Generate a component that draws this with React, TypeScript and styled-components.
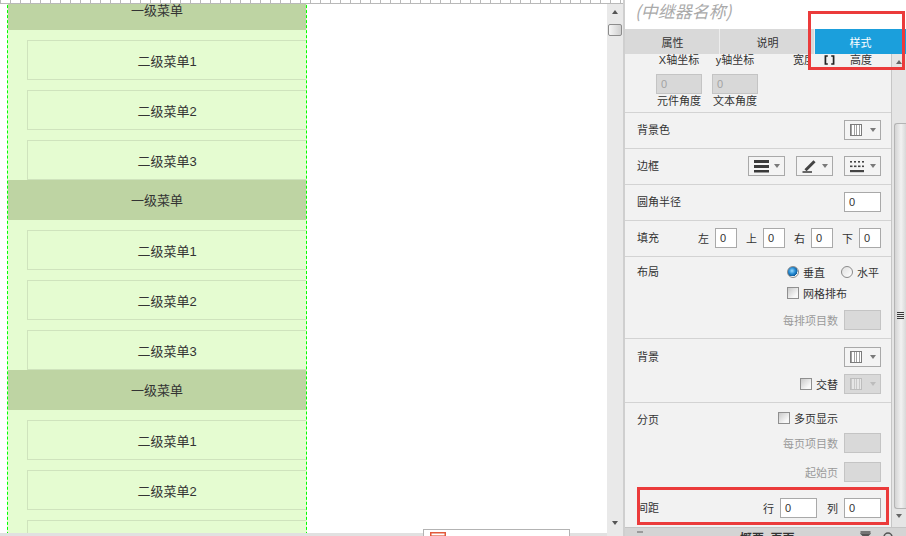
import React from 'react'
import styled, { createGlobalStyle } from 'styled-components'

const GlobalStyle = createGlobalStyle`
  * { box-sizing: border-box; }
  html, body { margin: 0; padding: 0; background: #fff; }
  body {
    font-family: "Liberation Sans", "Noto Sans CJK SC", sans-serif;
    font-size: 11px;
    color: #333;
  }
`

const menuGroups = [
  { title: '一级菜单', items: ['二级菜单1', '二级菜单2', '二级菜单3'] },
  { title: '一级菜单', items: ['二级菜单1', '二级菜单2', '二级菜单3'] },
  { title: '一级菜单', items: ['二级菜单1', '二级菜单2', '二级菜单3'] },
]

const LockIcon = () => (
  <svg width="11" height="10" viewBox="0 0 11 10">
    <path d="M3.8 1H1.4V9H3.8M7.2 1H9.6V9H7.2" fill="none" stroke="#222" strokeWidth="1.7" />
  </svg>
)

const WeightIcon = () => (
  <svg width="15" height="14" viewBox="0 0 15 14">
    <g fill="#3a3a3a">
      <rect x="0" y="1" width="15" height="3" />
      <rect x="0" y="6" width="15" height="3" />
      <rect x="0" y="11" width="15" height="2.5" />
    </g>
  </svg>
)

const PenIcon = () => (
  <svg width="16" height="14" viewBox="0 0 16 14">
    <path d="M0.5 13H10" stroke="#444" strokeWidth="1.6" />
    <path d="M3.5 11.2L12.5 2.2" stroke="#444" strokeWidth="3" />
  </svg>
)

const DashIcon = () => (
  <svg width="14" height="13" viewBox="0 0 14 13">
    <g fill="#444">
      <rect x="0" y="1" width="2" height="1.6" />
      <rect x="4" y="1" width="2" height="1.6" />
      <rect x="8" y="1" width="2" height="1.6" />
      <rect x="12" y="1" width="2" height="1.6" />
      <rect x="0" y="5.5" width="2.5" height="1.6" />
      <rect x="4" y="5.5" width="2.5" height="1.6" />
      <rect x="8" y="5.5" width="2.5" height="1.6" />
      <rect x="12" y="5.5" width="2" height="1.6" />
      <rect x="0" y="10" width="14" height="2.2" />
    </g>
  </svg>
)

const FunnelIcon = () => (
  <svg width="11" height="9" viewBox="0 0 11 9">
    <path d="M0.5 1H10.5M1.5 3L5.5 7L9.5 3Z" fill="#555" stroke="#555" strokeWidth="1.4" />
  </svg>
)

const SearchIcon = () => (
  <svg width="11" height="9" viewBox="0 0 11 9">
    <circle cx="5" cy="6" r="4" fill="none" stroke="#555" strokeWidth="1.5" />
  </svg>
)

const TableIcon = () => (
  <svg width="16" height="10" viewBox="0 0 16 10">
    <rect x="0.75" y="1.75" width="14.5" height="10" fill="#fff" stroke="#e25b3c" strokeWidth="1.5" />
    <path d="M1 5H15" stroke="#e25b3c" strokeWidth="1.2" />
  </svg>
)

const App = () => (
  <>
    <GlobalStyle />
    <Screen>
      <Canvas>
        <Ruler />
        <CanvasMain>
          <StageColumn>
            <Stage>
              <MenuPanel>
                {menuGroups.map((g, gi) => (
                  <React.Fragment key={gi}>
                    <MenuHeader>{g.title}</MenuHeader>
                    {g.items.map(it => (
                      <SubItem key={it}>{it}</SubItem>
                    ))}
                  </React.Fragment>
                ))}
              </MenuPanel>
            </Stage>
            <CanvasFooter />
          </StageColumn>
          <CanvasScroll>
            <ArrowUp />
            <CanvasThumb />
            <ArrowDown />
          </CanvasScroll>
        </CanvasMain>
      </Canvas>

      <Inspector>
        <InspectorTitle>(中继器名称)</InspectorTitle>
        <Tabs>
          <Tab $w={95}>属性</Tab>
          <Tab $w={95}>说明</Tab>
          <Tab $w={91} $active>样式</Tab>
        </Tabs>
        <InspectorBody>
          <Content>
            <GeoSection>
              <GeoRow $h={12}>
                <GeoCell>X轴坐标</GeoCell>
                <GeoCell>y轴坐标</GeoCell>
                <ClipLabel>宽度</ClipLabel>
                <LockBox>
                  <LockIcon />
                </LockBox>
                <HeightLabel>高度</HeightLabel>
              </GeoRow>
              <GeoRow $h={20} $mt={8}>
                <GeoInput>0</GeoInput>
                <GeoInput>0</GeoInput>
              </GeoRow>
              <GeoRow $h={12} $mt={1}>
                <GeoCell>元件角度</GeoCell>
                <GeoCell>文本角度</GeoCell>
              </GeoRow>
            </GeoSection>

            <Section $pt={7} $pb={8}>
              <SectionLabel>背景色</SectionLabel>
              <Controls>
                <DropButton>
                  <Swatch />
                  <Caret />
                </DropButton>
              </Controls>
            </Section>

            <Section $pt={7} $pb={8}>
              <SectionLabel>边框</SectionLabel>
              <Controls>
                <ControlRow $gap={11}>
                  <DropButton>
                    <WeightIcon />
                    <Caret />
                  </DropButton>
                  <DropButton>
                    <PenIcon />
                    <Caret />
                  </DropButton>
                  <DropButton>
                    <DashIcon />
                    <Caret />
                  </DropButton>
                </ControlRow>
              </Controls>
            </Section>

            <Section $pt={7} $pb={8}>
              <SectionLabel>圆角半径</SectionLabel>
              <Controls>
                <ValueBox $w={37}>0</ValueBox>
              </Controls>
            </Section>

            <Section $pt={7} $pb={8}>
              <SectionLabel>填充</SectionLabel>
              <Controls>
                <ControlRow $gap={9}>
                  {['左', '上', '右', '下'].map(s => (
                    <FieldGroup key={s}>
                      <FieldText>{s}</FieldText>
                      <ValueBox $w={22}>0</ValueBox>
                    </FieldGroup>
                  ))}
                </ControlRow>
              </Controls>
            </Section>

            <Section $pt={5} $pb={8}>
              <SectionLabel>布局</SectionLabel>
              <Controls>
                <OptionGroup>
                  <ControlRow $gap={16}>
                    <CheckItem>
                      <Radio $checked />
                      <FieldText>垂直</FieldText>
                    </CheckItem>
                    <CheckItem>
                      <Radio />
                      <FieldText>水平</FieldText>
                    </CheckItem>
                  </ControlRow>
                  <ControlRow $h={22}>
                    <CheckItem>
                      <CheckBox />
                      <FieldText>网格排布</FieldText>
                    </CheckItem>
                  </ControlRow>
                </OptionGroup>
                <ControlRow $mt={6}>
                  <FieldText $muted>每排项目数</FieldText>
                  <ValueBox $w={37} $disabled />
                </ControlRow>
              </Controls>
            </Section>

            <Section $pt={8} $pb={8}>
              <SectionLabel>背景</SectionLabel>
              <Controls>
                <DropButton>
                  <Swatch />
                  <Caret />
                </DropButton>
                <ControlRow $mt={7}>
                  <CheckItem>
                    <CheckBox />
                    <FieldText>交替</FieldText>
                  </CheckItem>
                  <DropButton $disabled>
                    <Swatch $muted />
                    <Caret $muted />
                  </DropButton>
                </ControlRow>
              </Controls>
            </Section>

            <Section $pt={5} $pb={5} $noLine>
              <SectionLabel $offset={2}>分页</SectionLabel>
              <Controls>
                <ControlRow $mr={43}>
                  <CheckItem>
                    <CheckBox />
                    <FieldText>多页显示</FieldText>
                  </CheckItem>
                </ControlRow>
                <ControlRow $mt={5}>
                  <FieldText $muted>每页项目数</FieldText>
                  <ValueBox $w={37} $disabled />
                </ControlRow>
                <ControlRow $mt={9}>
                  <FieldText $muted>起始页</FieldText>
                  <ValueBox $w={37} $disabled />
                </ControlRow>
              </Controls>
            </Section>

            <Section $pt={11} $pb={0} $noLine>
              <SectionLabel>间距</SectionLabel>
              <Controls>
                <ControlRow $gap={10}>
                  <FieldGroup>
                    <FieldText>行</FieldText>
                    <ValueBox $w={37}>0</ValueBox>
                  </FieldGroup>
                  <FieldGroup>
                    <FieldText>列</FieldText>
                    <ValueBox $w={37}>0</ValueBox>
                  </FieldGroup>
                </ControlRow>
              </Controls>
            </Section>
          </Content>
          <PanelScroll>
            <SmallArrowUp />
            <PanelThumb>
              <Grip />
            </PanelThumb>
            <SmallArrowDown />
          </PanelScroll>
        </InspectorBody>
        <BottomBar>
          <CollapseMark />
          <BarTitle>概要: 页面</BarTitle>
          <BarIcons>
            <FunnelIcon />
            <SearchIcon />
          </BarIcons>
        </BottomBar>
      </Inspector>

      <DockTab>
        <TableIcon />
      </DockTab>
      <TabHighlight />
      <SpacingHighlight />
    </Screen>
  </>
)

const Screen = styled.div`
  position: relative;
  width: 906px;
  height: 536px;
  display: flex;
  overflow: hidden;
  background: #fff;
`

/* ---------- canvas ---------- */

const Canvas = styled.div`
  width: 623px;
  display: flex;
  flex-direction: column;
`
const Ruler = styled.div`
  height: 4px;
  border-bottom: 1px solid #b9b9b9;
  background: repeating-linear-gradient(90deg, #b9b9b9 0 1px, #fff 1px 10px);
`
const CanvasMain = styled.div`
  flex: 1;
  display: flex;
  min-height: 0;
`
const StageColumn = styled.div`
  flex: 1;
  display: flex;
  flex-direction: column;
`
const Stage = styled.div`
  flex: 1;
  background: #fff;
  overflow: hidden;
`
const CanvasFooter = styled.div`
  height: 3px;
  background: #e1e1e1;
`
const MenuPanel = styled.div`
  margin: -14px 0 0 7px;
  width: 300px;
  background: #e5fcd1;
  border-left: 1px dashed #00ff00;
  border-right: 1px dashed #00ff00;
`
const MenuHeader = styled.div`
  height: 40px;
  padding-bottom: 1px;
  display: flex;
  align-items: center;
  justify-content: center;
  background: #bed4a3;
  font-size: 13px;
  color: #333;
`
const SubItem = styled.div`
  height: 40px;
  margin: 10px 0 0 19px;
  display: flex;
  align-items: center;
  justify-content: center;
  border: 1px solid #cfe3bd;
  border-right: none;
  background: #e5fcd1;
  font-size: 13px;
  color: #333;
`
const CanvasScroll = styled.div`
  width: 16px;
  display: flex;
  flex-direction: column;
  align-items: center;
  background: #e9e9e9;
`
const ArrowUp = styled.span`
  margin-top: 6px;
  width: 0;
  height: 0;
  border-left: 3.5px solid transparent;
  border-right: 3.5px solid transparent;
  border-bottom: 4px solid #555;
`
const ArrowDown = styled.span`
  margin-top: auto;
  margin-bottom: 11px;
  width: 0;
  height: 0;
  border-left: 3.5px solid transparent;
  border-right: 3.5px solid transparent;
  border-top: 4px solid #555;
`
const CanvasThumb = styled.span`
  margin-top: 10px;
  width: 14px;
  height: 12px;
  border: 1px solid #8c8c8c;
  border-radius: 2px;
  background: linear-gradient(90deg, #f6f6f6, #cfcfcf);
`
const DockTab = styled.div`
  position: absolute;
  left: 423px;
  top: 529px;
  width: 147px;
  height: 12px;
  padding: 1px 6px;
  display: flex;
  align-items: flex-start;
  background: #fff;
  border: 1px solid #b3b3b3;
`

/* ---------- inspector ---------- */

const Inspector = styled.div`
  width: 283px;
  display: flex;
  flex-direction: column;
  border-left: 2px solid #cfcfcf;
  background: #f2f2f2;
`
const InspectorTitle = styled.div`
  height: 29px;
  padding-left: 10px;
  background: #fff;
  font-family: "Noto Sans CJK SC", sans-serif;
  font-size: 17px;
  font-style: italic;
  line-height: 21px;
  color: #aaaaaa;
  white-space: nowrap;
`
const Tabs = styled.div`
  height: 25px;
  display: flex;
`
const Tab = styled.div<{ $w: number; $active?: boolean }>`
  width: ${p => p.$w}px;
  display: flex;
  align-items: center;
  justify-content: center;
  background: ${p => (p.$active ? '#1b9fdc' : '#d9d9d9')};
  color: ${p => (p.$active ? '#fff' : '#333')};
  box-shadow: ${p => (p.$active ? 'none' : 'inset -1px 0 #ededed')};
  font-size: 11px;
`
const InspectorBody = styled.div`
  flex: 1;
  display: flex;
  min-height: 0;
  overflow: hidden;
`
const Content = styled.div`
  width: 266px;
  display: flex;
  flex-direction: column;
`
const GeoSection = styled.div`
  height: 59px;
  padding-left: 31px;
  border-bottom: 1px solid #d3d3d3;
`
const GeoRow = styled.div<{ $h: number; $mt?: number }>`
  height: ${p => p.$h}px;
  margin-top: ${p => p.$mt ?? 0}px;
  display: flex;
  align-items: center;
  gap: 10px;
  line-height: 12px;
`
const GeoCell = styled.span`
  width: 46px;
  text-align: center;
  white-space: nowrap;
`
const ClipLabel = styled.span`
  margin-left: 25px;
  width: 17px;
  overflow: hidden;
  white-space: nowrap;
`
const LockBox = styled.span`
  margin-left: 4px;
  display: flex;
`
const HeightLabel = styled.span`
  margin-left: 5px;
  white-space: nowrap;
`
const GeoInput = styled.div`
  width: 46px;
  height: 20px;
  padding-left: 4px;
  line-height: 18px;
  background: #d8d8d8;
  border: 1px solid #c4c4c4;
  color: #a3a3a3;
`
const Section = styled.div<{ $pt: number; $pb: number; $noLine?: boolean }>`
  display: flex;
  align-items: flex-start;
  justify-content: space-between;
  padding: ${p => p.$pt}px 10px ${p => p.$pb}px 12px;
  border-bottom: ${p => (p.$noLine ? 'none' : '1px solid #d3d3d3')};
`
const SectionLabel = styled.div<{ $offset?: number }>`
  height: 20px;
  line-height: 20px;
  margin-top: ${p => p.$offset ?? 0}px;
  white-space: nowrap;
  color: #333;
`
const Controls = styled.div`
  display: flex;
  flex-direction: column;
  align-items: flex-end;
`
const ControlRow = styled.div<{ $gap?: number; $h?: number; $mt?: number; $mr?: number }>`
  display: flex;
  align-items: center;
  gap: ${p => p.$gap ?? 6}px;
  height: ${p => p.$h ?? 20}px;
  margin-top: ${p => p.$mt ?? 0}px;
  margin-right: ${p => p.$mr ?? 0}px;
`
const OptionGroup = styled.div`
  width: 94px;
  display: flex;
  flex-direction: column;
  align-items: flex-start;
`
const FieldGroup = styled.div`
  display: flex;
  align-items: center;
  gap: 6px;
`
const FieldText = styled.span<{ $muted?: boolean }>`
  white-space: nowrap;
  color: ${p => (p.$muted ? '#9a9a9a' : '#333')};
`
const ValueBox = styled.div<{ $w: number; $disabled?: boolean }>`
  width: ${p => p.$w}px;
  height: 20px;
  padding-left: 4px;
  line-height: 18px;
  background: ${p => (p.$disabled ? '#d9d9d9' : '#fff')};
  border: 1px solid ${p => (p.$disabled ? '#c4c4c4' : '#a9a9a9')};
  color: #333;
`
const DropButton = styled.div<{ $disabled?: boolean }>`
  width: 37px;
  height: 20px;
  display: flex;
  align-items: center;
  justify-content: space-between;
  padding: 0 4px 0 5px;
  background: ${p => (p.$disabled ? '#d9d9d9' : '#f4f4f4')};
  border: 1px solid ${p => (p.$disabled ? '#c4c4c4' : '#a9a9a9')};
`
const Swatch = styled.span<{ $muted?: boolean }>`
  width: 12px;
  height: 12px;
  border: 1px solid ${p => (p.$muted ? '#bdbdbd' : '#7c7c7c')};
  background: repeating-linear-gradient(
    90deg,
    ${p => (p.$muted ? '#c9c9c9' : '#a2a2a2')} 0 1px,
    ${p => (p.$muted ? '#e6e6e6' : '#fff')} 1px 2.5px
  );
`
const Caret = styled.span<{ $muted?: boolean }>`
  width: 0;
  height: 0;
  border-left: 3.5px solid transparent;
  border-right: 3.5px solid transparent;
  border-top: 4px solid ${p => (p.$muted ? '#bcbcbc' : '#7a7a7a')};
`
const CheckItem = styled.div`
  display: flex;
  align-items: center;
  gap: 4px;
`
const CheckBox = styled.span`
  width: 12px;
  height: 12px;
  border: 1px solid #8f8f8f;
  background: linear-gradient(135deg, #c9c9c9, #f8f8f8 75%);
`
const Radio = styled.span<{ $checked?: boolean }>`
  width: 12px;
  height: 12px;
  border-radius: 50%;
  border: 1px solid #8a8a8a;
  background: ${p =>
    p.$checked
      ? 'radial-gradient(circle at 40% 38%, #9bdcff 0, #2a8fd6 35%, #0d5c9c 62%, #f4f4f4 66%)'
      : 'linear-gradient(135deg, #e0e0e0, #fff)'};
`
const PanelScroll = styled.div`
  width: 15px;
  display: flex;
  flex-direction: column;
  align-items: center;
  border-left: 1px solid #c6c6c6;
  background: #e5e5e5;
`
const SmallArrowUp = styled(ArrowUp)`
  margin-top: 6px;
  border-bottom-color: #666;
`
const SmallArrowDown = styled(ArrowDown)`
  margin-bottom: 9px;
  border-top-color: #666;
`
const PanelThumb = styled.div`
  align-self: flex-end;
  margin-top: 59px;
  width: 12px;
  height: 386px;
  display: flex;
  align-items: center;
  justify-content: center;
  border: 1px solid #b4b4b4;
  border-right: none;
  border-radius: 3px 0 0 3px;
  background: linear-gradient(90deg, #d4d4d4, #f1f1f1 55%, #d8d8d8);
`
const Grip = styled.span`
  width: 7px;
  height: 8px;
  background: repeating-linear-gradient(180deg, #3a3a3a 0 1px, transparent 1px 2px);
`
const BottomBar = styled.div`
  height: 9px;
  display: flex;
  align-items: flex-start;
  padding-left: 12px;
  background: #d4d4d4;
  border-top: 1px solid #c4c4c4;
  overflow: hidden;
`
const CollapseMark = styled.span`
  margin-top: 3px;
  width: 6px;
  height: 2px;
  background: #9a9a9a;
`
const BarTitle = styled.span`
  margin: 2px 0 0 97px;
  font-family: "Noto Sans CJK SC", sans-serif;
  font-size: 12px;
  font-weight: bold;
  line-height: 16px;
  color: #333;
  white-space: nowrap;
`
const BarIcons = styled.span`
  margin: 3px 12px 0 auto;
  display: flex;
  gap: 12px;
`

/* ---------- annotations ---------- */

const TabHighlight = styled.div`
  position: absolute;
  left: 808px;
  top: 11px;
  width: 97px;
  height: 59px;
  border: 3px solid #eb3b3b;
`
const SpacingHighlight = styled.div`
  position: absolute;
  left: 637px;
  top: 487px;
  width: 252px;
  height: 38px;
  border: 3px solid #eb3b3b;
`

export default App
